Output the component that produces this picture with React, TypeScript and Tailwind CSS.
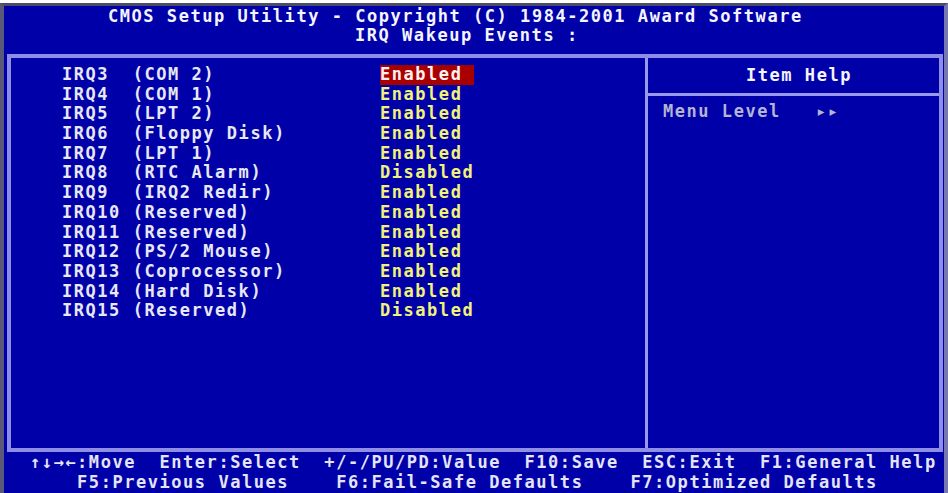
const rows: [string, string][] = [
  ["IRQ3  (COM 2)", "Enabled"],
  ["IRQ4  (COM 1)", "Enabled"],
  ["IRQ5  (LPT 2)", "Enabled"],
  ["IRQ6  (Floppy Disk)", "Enabled"],
  ["IRQ7  (LPT 1)", "Enabled"],
  ["IRQ8  (RTC Alarm)", "Disabled"],
  ["IRQ9  (IRQ2 Redir)", "Enabled"],
  ["IRQ10 (Reserved)", "Enabled"],
  ["IRQ11 (Reserved)", "Enabled"],
  ["IRQ12 (PS/2 Mouse)", "Enabled"],
  ["IRQ13 (Coprocessor)", "Enabled"],
  ["IRQ14 (Hard Disk)", "Enabled"],
  ["IRQ15 (Reserved)", "Disabled"],
];

export default function App() {
  return (
    <div className="w-[948px] h-[493px] bg-white pt-[3px] overflow-hidden font-['DejaVu_Sans_Mono',monospace] font-bold text-[17px] tracking-[1.54px] leading-[19.7px] whitespace-pre">
      <div className="h-[490px] flex flex-col bg-[#0000a8] border-t-[3px] border-t-[#4c4c66] border-l-[4px] border-l-[#5a5a78] border-r-[4px] border-r-[#7878b0]">
        {/* title */}
        <div className="h-[48px] pt-[1px] flex flex-col text-[#f4f4ff]">
          <div className="h-[19px] leading-[19px] pl-[104px]">CMOS Setup Utility - Copyright (C) 1984-2001 Award Software</div>
          <div className="h-[19px] leading-[19px] pl-[351px]">IRQ Wakeup Events :</div>
        </div>

        {/* main frame */}
        <div className="ml-[3px] mr-[1px] h-[398px] flex border-[4px] border-[#8e8ee6]">
          <div className="w-[634px] pt-[7px] pl-[51px]">
            {rows.map(([label, value], i) => (
              <div key={label} className="h-[19.7px] flex">
                <span className="w-[318px] text-[#e8e8f4]">{label}</span>
                <span
                  className={
                    i === 0
                      ? "w-[94px] bg-[#a80000] text-[#fff0f0]"
                      : "w-[94px] text-[#f2f27a]"
                  }
                >
                  {value}
                </span>
              </div>
            ))}
          </div>

          {/* item help */}
          <div className="flex-1 flex flex-col border-l-[3px] border-l-[#9898ec]">
            <div className="h-[38px] flex items-center pl-[98px] border-b-[3px] border-b-[#9898ec] text-[#f4f4ff]">
              Item Help
            </div>
            <div className="pt-[6px] pl-[15px] h-[19.7px] box-content text-[#b4b4d4]">
              Menu Level   ▸▸
            </div>
          </div>
        </div>

        {/* key help */}
        <div className="pl-[26px] text-[#e4e4f8]">
          <div className="h-[20px] leading-[20px]">↑↓→←:Move  Enter:Select  +/-/PU/PD:Value  F10:Save  ESC:Exit  F1:General Help</div>
          <div className="h-[20px] leading-[20px]">    F5:Previous Values    F6:Fail-Safe Defaults    F7:Optimized Defaults</div>
        </div>
      </div>
    </div>
  );
}
